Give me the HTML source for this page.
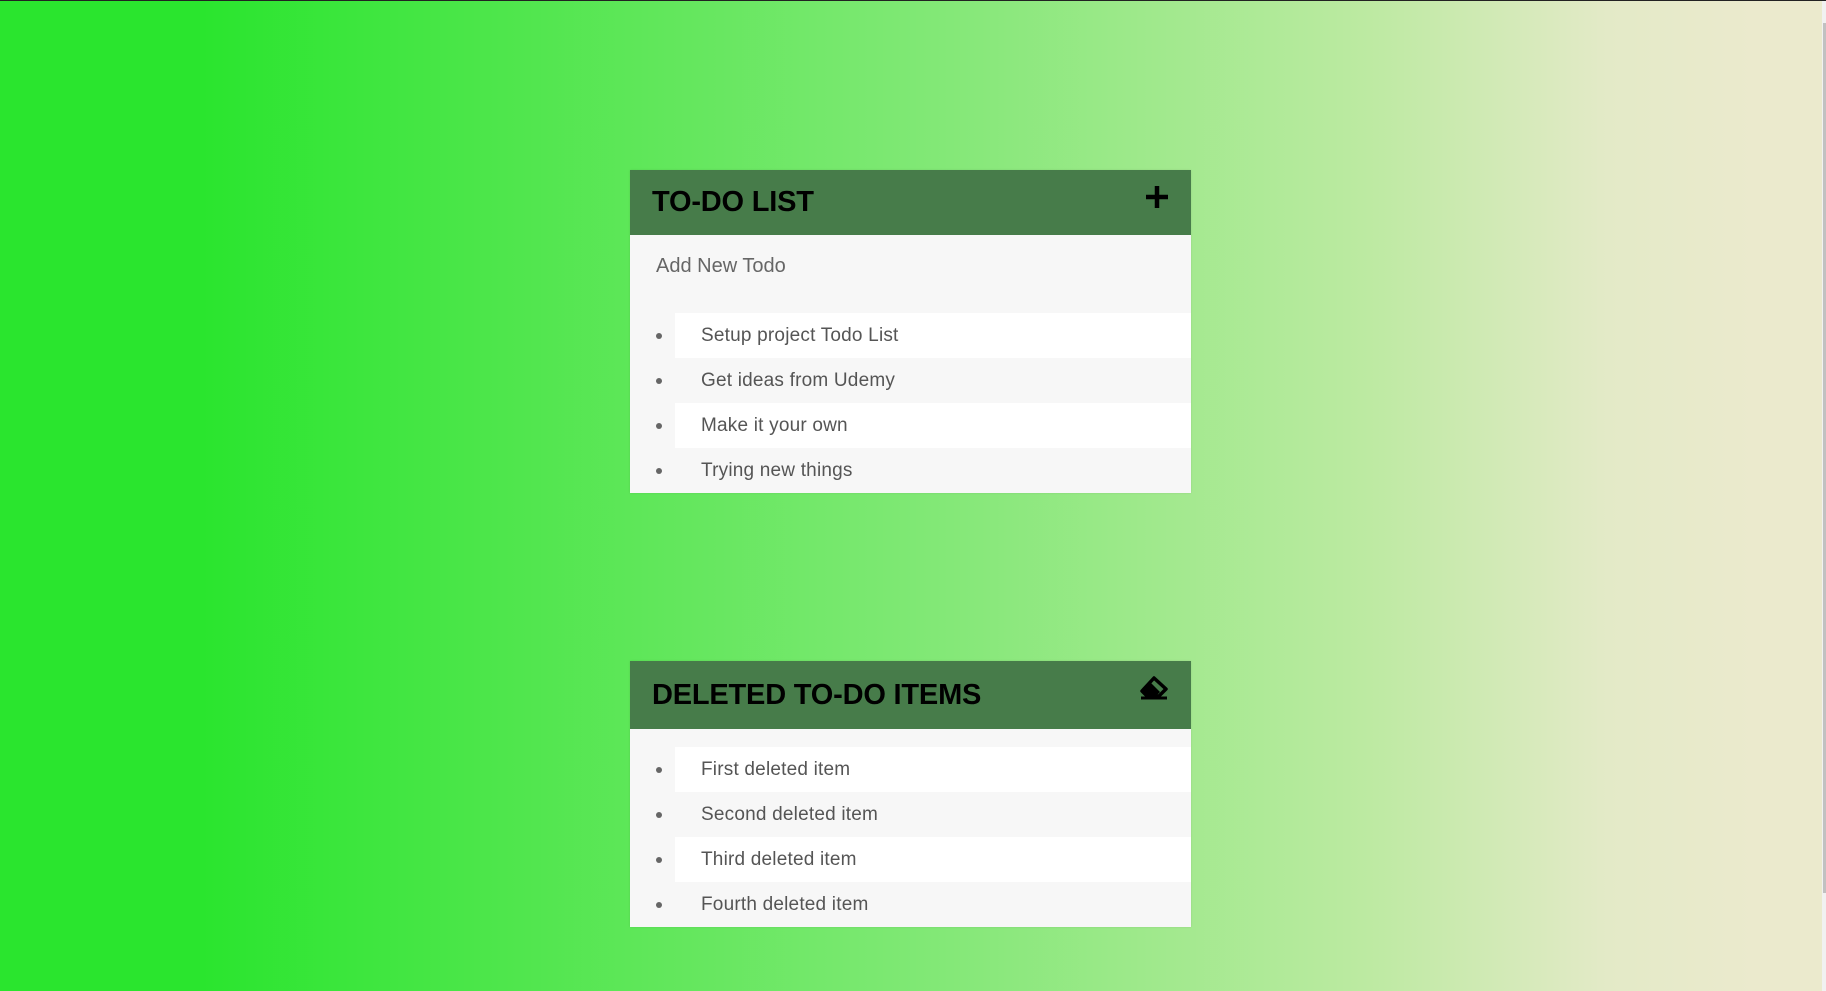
<!DOCTYPE html>
<html><head><meta charset="utf-8"><style>
*{box-sizing:border-box;margin:0;padding:0}
html,body{width:1826px;height:991px;overflow:hidden}
body{position:relative;background:linear-gradient(to right,#2ae52e 0%,#2ae52e 11%,#7fe874 50%,#bdeaa2 75%,#e3eac7 88%,#ebeacd 96%);font-family:"Liberation Sans",sans-serif}
.topline{position:absolute;left:0;top:0;width:1826px;height:1px;background:#222}
.sb{position:absolute;right:0;top:1px;width:4px;height:990px;background:#f1f1f1}
.sb i{position:absolute;left:1px;top:22px;width:3px;height:870px;background:#c1c1c1}
.card{position:absolute;left:630px;width:561px;background:#f7f7f7;box-shadow:0 0 2px rgba(0,0,0,.1)}
.hd{background:#477c4a;position:relative;color:#000;font-weight:bold;font-size:29px;letter-spacing:-0.2px;padding-left:22px}
.inp{height:78px;padding:20px 0 0 26px;font-size:20px;color:#666}
ul{list-style:none;position:relative;z-index:0}
li{height:45px;position:relative;font-size:19px;letter-spacing:0.2px;color:#555;line-height:45px;padding-left:71px}
li:before{content:"";position:absolute;left:26px;top:20px;width:6px;height:6px;border-radius:50%;background:#666}
li.w:after{content:"";position:absolute;left:45px;top:0;right:0;bottom:0;background:#fff;z-index:-1}
li span{position:relative;z-index:1}
</style></head><body>
<div class="topline"></div>
<div class="card" style="top:170px">
 <div class="hd" style="height:65px;line-height:65px">TO-DO LIST
  <svg style="position:absolute;right:21px;top:14px" width="26" height="26" viewBox="0 0 26 26"><path d="M13 2v22M2 13h22" stroke="#000" stroke-width="4.5"/></svg>
 </div>
 <div class="inp">Add New Todo</div>
 <ul>
  <li class="w"><span>Setup project Todo List</span></li>
  <li><span>Get ideas from Udemy</span></li>
  <li class="w"><span>Make it your own</span></li>
  <li><span>Trying new things</span></li>
 </ul>
</div>
<div class="card" style="top:661px">
 <div class="hd" style="height:68px;line-height:68px">DELETED TO-DO ITEMS
  <svg style="position:absolute;right:22px;top:13px" width="30" height="26" viewBox="0 0 30 26"><path d="M3 17 L15 4 L27 15 L20 22 H8 Z" fill="none" stroke="#000" stroke-width="3.5" stroke-linejoin="round"/><path d="M4 17 L12 9 L21 18 L17 22 H8 Z" fill="#000"/><path d="M2 24H28" stroke="#000" stroke-width="3"/></svg>
 </div>
 <div style="height:18px"></div>
 <ul>
  <li class="w"><span>First deleted item</span></li>
  <li><span>Second deleted item</span></li>
  <li class="w"><span>Third deleted item</span></li>
  <li><span>Fourth deleted item</span></li>
 </ul>
</div>
<div class="sb"><i></i></div>
</body></html>
